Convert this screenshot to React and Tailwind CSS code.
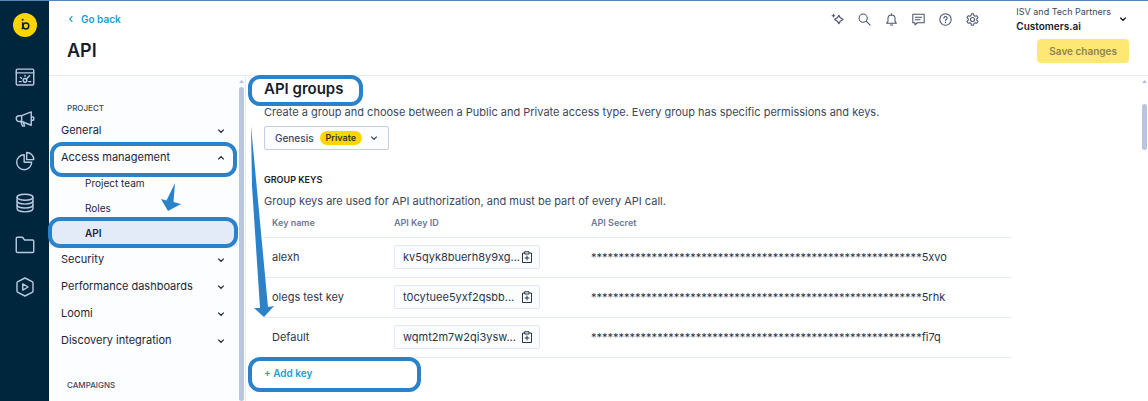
import { useState } from 'react';

function Icon({ size = 16, width = 1.5, className, children }) {
  return (
    <svg width={size} height={size} viewBox="0 0 24 24" fill="none" stroke="currentColor" strokeWidth={width}
      strokeLinecap="round" strokeLinejoin="round" className={className} aria-hidden="true">
      {children}
    </svg>
  );
}

function Chevron({ className }) {
  return (
    <svg width="8" height="8" viewBox="0 0 8 8" fill="none" stroke="currentColor" strokeWidth="1.2" className={className} aria-hidden="true">
      <path d="M1.2 2.6 4 5.3 6.8 2.6" />
    </svg>
  );
}

const railItems = [
  {
    label: 'Dashboards',
    icon: (
      <>
        <rect x="1.5" y="2.5" width="21" height="19" rx="1.5" />
        <path d="M1.5 7h21M5 17.5h2.5M16.5 17.5H19M6.5 12.5l1.5 1M12 10v1M17.5 10.5l-4 4" />
        <circle cx="12" cy="16" r="2.2" />
      </>
    ),
  },
  {
    label: 'Campaigns',
    icon: (
      <>
        <path d="M8 8l11.5-4.5v16L8 15H5a3.5 3.5 0 0 1 0-7h3zM8 8v7M19.5 9.5h2a1 1 0 0 1 1 1v2a1 1 0 0 1-1 1h-2" />
        <path d="M7 15l2 5.5h2.5L10 15.8" />
      </>
    ),
  },
  {
    label: 'Analyses',
    icon: (
      <>
        <path d="M11 4.5a9 9 0 1 0 9 9h-9z" />
        <path d="M14 1.8a8.5 8.5 0 0 1 8.5 8.5H14z" />
      </>
    ),
  },
  {
    label: 'Data & Assets',
    icon: (
      <>
        <ellipse cx="12" cy="5" rx="9.5" ry="3.6" />
        <path d="M2.5 5v14c0 2 4.2 3.6 9.500 3.600s9.500-1.600 9.500-3.600V5" />
        <path d="M2.5 9.7c0 2 4.2 3.6 9.500 3.600s9.500-1.600 9.500-3.600M2.500 14.400c0 2 4.200 3.600 9.500 3.600s9.500-1.600 9.500-3.600" />
      </>
    ),
  },
  {
    label: 'Files',
    icon: <path d="M1.5 4.2A1.5 1.5 0 0 1 3 2.7h6L11.500 6H21a1.500 1.500 0 0 1 1.500 1.500v12A1.500 1.500 0 0 1 21 21H3a1.500 1.500 0 0 1-1.500-1.500z" />,
  },
  {
    label: 'Loomi',
    icon: (
      <>
        <path d="M12 1.2l8.5 4.3a2 2 0 0 1 1.1 1.8v9.4a2 2 0 0 1-1.1 1.8L12 22.8l-8.500-4.300a2 2 0 0 1-1.100-1.800V7.300a2 2 0 0 1 1.100-1.800z" />
        <path d="M9.3 8.3v7.4l6.4-3.7z" />
      </>
    ),
  },
];

const toolItems = [
  {
    label: 'Assistant',
    icon: (
      <>
        <path d="M14.500 4c.8 3.800 3 6 8 8-5 2-7.200 4.200-8 8-.8-3.800-3-6-8-8 5-2 7.200-4.200 8-8z" />
        <path d="M4.500 2.500v5M2 5h5" />
      </>
    ),
  },
  {
    label: 'Search',
    icon: (
      <>
        <circle cx="9.500" cy="9.500" r="7.500" />
        <path d="M15 15l7.500 7.500" />
      </>
    ),
  },
  {
    label: 'Notifications',
    icon: (
      <>
        <path d="M3 19h18l-2.500-3.500V10a6.500 6.500 0 0 0-13 0v5.500z" />
        <path d="M12 3.500V1.500M10 22h4" />
      </>
    ),
  },
  {
    label: 'Messages',
    icon: (
      <>
        <path d="M1.500 2.500h21V18H10l-4.500 4v-4h-4z" />
        <path d="M6 8h12M6 12.500h9" />
      </>
    ),
  },
  {
    label: 'Help',
    icon: (
      <>
        <circle cx="12" cy="12" r="10.500" />
        <path d="M9 9.500a3 3 0 1 1 4.500 2.600c-1 .6-1.500 1-1.500 2.200M12 17.200v.3" />
      </>
    ),
  },
  {
    label: 'Settings',
    icon: (
      <>
        <path d="M10 1.500h4l.7 3.200 2.200 1.200 3.100-1 2.100 3.500-2.300 2.300v2.600l2.300 2.300-2.100 3.500-3.100-1-2.200 1.200-.7 3.200h-4l-.7-3.200-2.200-1.200-3.100 1-2.100-3.500 2.300-2.300v-2.600L1.900 8.400 4 4.900l3.100 1 2.200-1.200z" />
        <circle cx="12" cy="12" r="3.700" />
      </>
    ),
  },
];

const keys = [
  { name: 'alexh', id: 'kv5qyk8buerh8y9xg...', tail: '5xvo' },
  { name: 'olegs test key', id: 't0cytuee5yxf2qsbb...', tail: '5rhk' },
  { name: 'Default', id: 'wqmt2m7w2qi3ysw...', tail: 'fi7q' },
];

function Highlight({ className }) {
  return <span className={`pointer-events-none absolute z-10 rounded-xl border-4 border-[#2b82c9] ${className}`} />;
}

function Rail() {
  return (
    <nav aria-label="Main" className="flex w-[49px] shrink-0 flex-col items-center bg-[#00263e] pt-3">
      <a href="#home" aria-label="Bloomreach">
        <svg width="24" height="24" viewBox="0 0 24 24" aria-hidden="true">
          <circle cx="12" cy="12" r="12" fill="#ffd500" />
          <path d="M9.700 9.300v5.200a2 2 0 0 1-.9 1.600" fill="none" stroke="#00263e" strokeWidth="1.500" />
          <circle cx="12.900" cy="13" r="2.900" fill="none" stroke="#00263e" strokeWidth="1.500" />
          <circle cx="9.600" cy="6.800" r="1" fill="#00263e" />
        </svg>
      </a>
      <div className="mt-[30px] flex flex-col gap-[22px]">
        {railItems.map(item => (
          <a key={item.label} href={`#${item.label}`} aria-label={item.label} className="text-[#b9c9e0]">
            <Icon size={20} width={1.7}>{item.icon}</Icon>
          </a>
        ))}
      </div>
    </nav>
  );
}

function Header() {
  return (
    <header className="flex h-[75px] shrink-0 justify-between border-b border-[#e6eaf5] bg-white pr-[19px] pl-[18px]">
      <div>
        <a href="#back" className="mt-3 flex items-center gap-1.5 text-[10px] leading-3 font-semibold text-[#1a9fcf]">
          <Chevron className="rotate-90" />
          Go back
        </a>
        <h1 className="mt-4 text-lg leading-5 font-semibold text-[#161d2b]">API</h1>
      </div>
      <div className="flex flex-col items-end">
        <div className="mt-1 flex items-center">
          <div className="mr-9 flex gap-3">
            {toolItems.map(item => (
              <button key={item.label} aria-label={item.label} className="px-px text-[#46536c]">
                <Icon size={13} width={1.9}>{item.icon}</Icon>
              </button>
            ))}
          </div>
          <button className="flex items-center gap-2 pr-0.5 text-left">
            <span className="text-[9px] leading-[14px] text-[#3c475c]">
              ISV and Tech Partners
              <span className="block text-[10px] font-semibold text-[#161d2b]">Customers.ai</span>
            </span>
            <Chevron />
          </button>
        </div>
        <button className="mt-1.5 h-6 rounded-sm bg-[#ffe773] px-3 text-[10px] font-semibold text-[#8d8453]">
          Save changes
        </button>
      </div>
    </header>
  );
}

function ScrollBar({ className }) {
  return (
    <div className="flex w-2 shrink-0 flex-col items-center pt-1">
      <svg width="5" height="3" viewBox="0 0 5 3" aria-hidden="true"><path d="M0 3 2.5 0 5 3z" fill="#b4bfdb" /></svg>
      <div className={`w-[5px] rounded-full bg-[#b9c5df] ${className}`} />
    </div>
  );
}

function NavGroup({ label, open, onClick, children }) {
  return (
    <div className="relative">
      <button onClick={onClick} aria-expanded={!!open} className="flex h-[27px] w-full items-center justify-between pr-3 pl-3 text-[#1d2637]">
        {label}
        <Chevron className={open ? 'rotate-180' : ''} />
      </button>
      {children}
    </div>
  );
}

function SideMenu() {
  const [open, setOpen] = useState(true);

  return (
    <aside className="flex w-[197px] shrink-0 border-r border-[#e6eaf5] bg-[#fcfdff]">
      <nav aria-label="Project settings" className="flex-1 text-[11px]">
        <h2 className="mt-[26px] mb-[3px] pl-[18px] text-[8px] leading-3 font-medium text-[#3c475c]">PROJECT</h2>
        <NavGroup label="General" />
        <NavGroup label="Access management" open={open} onClick={() => setOpen(!open)}>
          <Highlight className="-top-0.5 right-0 left-px h-[35px]" />
        </NavGroup>
        {open && (
          <div className="relative text-[10px] text-[#1d2637]">
            <ul>
              <li><a href="#team" className="flex h-[25px] items-center pl-9">Project team</a></li>
              <li><a href="#roles" className="flex h-[25px] items-center pl-9">Roles</a></li>
              <li className="relative">
                <a href="#api" aria-current="page" className="flex h-[25px] items-center bg-[#e4ebf8] pl-9 font-semibold">API</a>
                <Highlight className="-inset-x-px -top-1 h-[31px]" />
              </li>
            </ul>
            <svg width="20" height="28" viewBox="0 0 20 28" className="absolute top-3 left-28" aria-hidden="true">
              <path d="M14 0 12.500 19 20 21 7 28 0 16 5.500 17.500z" fill="#2b82c9" />
            </svg>
          </div>
        )}
        <NavGroup label="Security" />
        <NavGroup label="Performance dashboards" />
        <NavGroup label="Loomi" />
        <NavGroup label="Discovery integration" />
        <h2 className="mt-[25px] pl-[18px] text-[8px] leading-3 font-medium text-[#3c475c]">CAMPAIGNS</h2>
      </nav>
      <ScrollBar className="mt-1 flex-1" />
    </aside>
  );
}

function CopyIcon() {
  return (
    <Icon size={12} width={2}>
      <path d="M7.5 4H3v19h18V4h-4.500" />
      <path d="M8 1.500h8v4.500H8zM12 10v8M8 14h8" />
    </Icon>
  );
}

function KeyTable() {
  return (
    <table className="w-full max-w-[747px] table-fixed text-left text-[11px] text-[#2b3549]">
      <thead>
        <tr className="h-7 border-b border-[#e3e9f6] text-[9px] text-[#6b7a99]">
          <th className="w-[130px] pl-2 font-semibold">Key name</th>
          <th className="w-[197px] font-semibold">API Key ID</th>
          <th className="font-semibold">API Secret</th>
        </tr>
      </thead>
      <tbody>
        {keys.map(key => (
          <tr key={key.name} className="h-10 border-b border-[#e3e9f6]">
            <td className="pl-2">{key.name}</td>
            <td>
              <div className="flex h-6 w-[146px] items-center justify-between rounded-xs border border-[#dfe6f5] bg-[#fcfdff] pr-1.5 pl-2">
                {key.id}
                <button aria-label={`Copy ${key.name}`}><CopyIcon /></button>
              </div>
            </td>
            <td className="whitespace-nowrap">{'*'.repeat(60)}{key.tail}</td>
          </tr>
        ))}
      </tbody>
    </table>
  );
}

function ApiGroups() {
  return (
    <main className="relative min-w-0 flex-1 pl-[18px] text-[11px] text-[#3c475c]">
      <div className="relative w-fit pt-[3px]">
        <h2 className="text-[15px] leading-5 font-semibold text-[#161d2b]">API groups</h2>
        <Highlight className="-top-px -right-5 -left-4 h-[31px]" />
      </div>
      <p className="mt-[5px] leading-4">
        Create a group and choose between a Public and Private access type. Every group has specific permissions and keys.
      </p>
      <button className="mt-1.5 flex h-6 items-center rounded-xs border border-[#c3cde6] bg-[#fcfdff] px-2.5 text-[10px] font-medium">
        Genesis
        <span className="mr-2 ml-1.5 rounded-full bg-[#ffd500] px-1.5 text-[9px] leading-[14px] font-semibold text-[#3b3410]">Private</span>
        <Chevron />
      </button>
      <h3 className="mt-6 text-[9px] leading-3 font-semibold text-[#161d2b]">GROUP KEYS</h3>
      <p className="mt-[7px] leading-4">Group keys are used for API authorization, and must be part of every API call.</p>
      <KeyTable />
      <div className="relative">
        <button className="mt-[7px] block text-[10px] leading-4 font-semibold text-[#1a9fcf]">+ Add key</button>
        <Highlight className="-top-2 -left-4 h-[35px] w-[173px]" />
      </div>
      <svg width="24" height="192" viewBox="0 0 24 192" className="absolute top-[50px] left-[5px]" aria-hidden="true">
        <path d="M0 0 17 181 23 180 13 191 3 182 9 182 1 60z" fill="#2b82c9" />
      </svg>
    </main>
  );
}

function App() {
  return (
    <div className="flex h-screen overflow-hidden border-t border-[#5685b8] bg-white font-['Inter',sans-serif]">
      <Rail />
      <div className="flex min-w-0 flex-1 flex-col">
        <Header />
        <div className="flex min-h-0 flex-1">
          <SideMenu />
          <ApiGroups />
          <ScrollBar className="mt-[21px] h-[46px]" />
        </div>
      </div>
    </div>
  );
}

export default App;
